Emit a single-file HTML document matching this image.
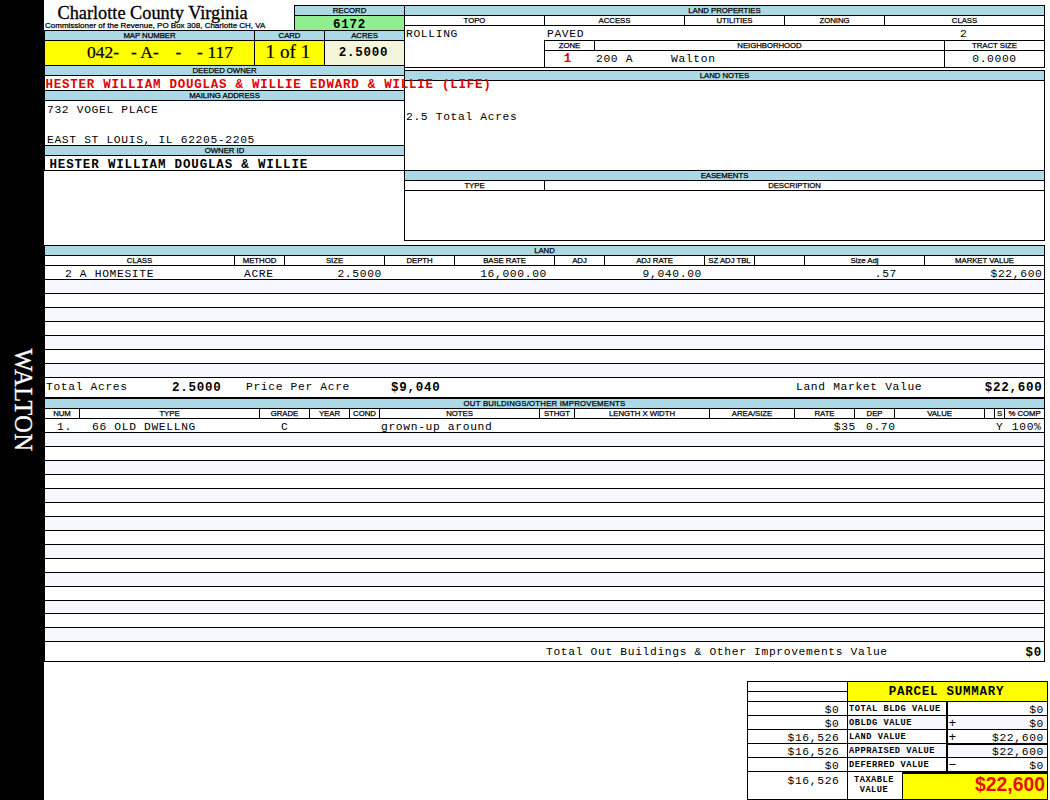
<!DOCTYPE html>
<html><head><meta charset="utf-8"><title>Charlotte County Virginia</title>
<style>
html,body{margin:0;padding:0;background:#fff}
#p{position:relative;width:1050px;height:800px;overflow:hidden;background:#fff}
.r,.l,.t{position:absolute}
.l{background:#000}
.t{white-space:nowrap;color:#000}
.lb{font:7.8px/10px "Liberation Sans",Arial,sans-serif;letter-spacing:-0.05px;-webkit-text-stroke:0.25px #000}
.sub{font:8px/10px "Liberation Sans",Arial,sans-serif;-webkit-text-stroke:0.25px #000}
.title{font:18.3px/19px "Liberation Serif","Times New Roman",serif;-webkit-text-stroke:0.3px #000}
.big{font:17.5px/23px "Liberation Serif","Times New Roman",serif;-webkit-text-stroke:0.2px #000}
.m{font:11.3px/14px "Liberation Mono","Courier New",monospace;letter-spacing:0.65px}
.mb{font:bold 12.5px/14px "Liberation Mono","Courier New",monospace;letter-spacing:0.76px}
.sl{font:bold 8.7px/12px "Liberation Mono","Courier New",monospace;letter-spacing:0.52px}
.red{color:#e00000}
.tot{font:bold 19.4px/25px "Liberation Sans",Arial,sans-serif;color:#e41000}
.walton{left:-36.6px;top:388px;width:120px;text-align:center;letter-spacing:0.5px;color:#fff;-webkit-text-stroke:0.3px #fff;font:24.3px/24px "Liberation Serif","Times New Roman",serif;transform:rotate(90deg);transform-origin:center}
</style></head>
<body><div id="p">
<div class="r" style="left:0px;top:0px;width:44px;height:800px;background:#000"></div>
<div class="t walton">WALTON</div>
<div class="t title" style="left:57.5px;top:3.5px;">Charlotte County Virginia</div>
<div class="t sub" style="left:45px;top:20.5px;">Commissioner of the Revenue, PO Box 308, Charlotte CH, VA</div>
<div class="r" style="left:294px;top:5px;width:111px;height:26px;background:#000"></div>
<div class="r" style="left:295px;top:6px;width:109px;height:9px;background:#add8e6"></div>
<div class="r" style="left:295px;top:16px;width:109px;height:14px;background:#90ee90"></div>
<div class="t lb" style="left:295px;top:6px;width:109px;text-align:center;">RECORD</div>
<div class="t mb" style="left:295px;top:18px;width:109px;text-align:center;">6172</div>
<div class="r" style="left:44px;top:30px;width:361px;height:36px;background:#000"></div>
<div class="r" style="left:45px;top:31px;width:209px;height:9px;background:#add8e6"></div>
<div class="r" style="left:255px;top:31px;width:69px;height:9px;background:#add8e6"></div>
<div class="r" style="left:325px;top:31px;width:79px;height:9px;background:#add8e6"></div>
<div class="r" style="left:45px;top:41px;width:209px;height:24px;background:#ffff00"></div>
<div class="r" style="left:255px;top:41px;width:69px;height:24px;background:#ffff00"></div>
<div class="r" style="left:325px;top:41px;width:79px;height:24px;background:#f5f5dc"></div>
<div class="t lb" style="left:45px;top:31px;width:209px;text-align:center;">MAP NUMBER</div>
<div class="t lb" style="left:255px;top:31px;width:69px;text-align:center;">CARD</div>
<div class="t lb" style="left:325px;top:31px;width:79px;text-align:center;">ACRES</div>
<div class="t big" style="left:87px;top:41px;">042-</div>
<div class="t big" style="left:131px;top:41px;">- A-</div>
<div class="t big" style="left:175.5px;top:41px;">-</div>
<div class="t big" style="left:197px;top:41px;">-</div>
<div class="t big" style="left:207.5px;top:41px;">117</div>
<div class="t big" style="left:265.5px;top:40px;font-size:19.2px;">1 of 1</div>
<div class="t mb" style="left:324px;top:46px;width:79px;text-align:center;">2.5000</div>
<div class="r" style="left:44px;top:65px;width:361px;height:106px;background:#000"></div>
<div class="r" style="left:45px;top:66px;width:359px;height:9px;background:#add8e6"></div>
<div class="t lb" style="left:45px;top:66px;width:359px;text-align:center;">DEEDED OWNER</div>
<div class="r" style="left:45px;top:76px;width:359px;height:14px;background:#fff"></div>
<div class="r" style="left:45px;top:91px;width:359px;height:9px;background:#add8e6"></div>
<div class="t lb" style="left:45px;top:91px;width:359px;text-align:center;">MAILING ADDRESS</div>
<div class="r" style="left:45px;top:101px;width:359px;height:44px;background:#fff"></div>
<div class="r" style="left:45px;top:146px;width:359px;height:9px;background:#add8e6"></div>
<div class="t lb" style="left:45px;top:146px;width:359px;text-align:center;">OWNER ID</div>
<div class="r" style="left:45px;top:156px;width:359px;height:14px;background:#fff"></div>
<div class="t m" style="left:47px;top:103px;">732 VOGEL PLACE</div>
<div class="t m" style="left:47px;top:133px;">EAST ST LOUIS, IL 62205-2205</div>
<div class="t mb" style="left:49.5px;top:158px;letter-spacing:0.84px;">HESTER WILLIAM DOUGLAS &amp; WILLIE</div>
<div class="r" style="left:404px;top:5px;width:641px;height:63px;background:#000"></div>
<div class="r" style="left:405px;top:6px;width:639px;height:9px;background:#add8e6"></div>
<div class="t lb" style="left:405px;top:6px;width:639px;text-align:center;">LAND PROPERTIES</div>
<div class="r" style="left:405px;top:16px;width:139px;height:9px;background:#fff"></div>
<div class="t lb" style="left:405px;top:16px;width:139px;text-align:center;">TOPO</div>
<div class="r" style="left:545px;top:16px;width:139px;height:9px;background:#fff"></div>
<div class="t lb" style="left:545px;top:16px;width:139px;text-align:center;">ACCESS</div>
<div class="r" style="left:685px;top:16px;width:99px;height:9px;background:#fff"></div>
<div class="t lb" style="left:685px;top:16px;width:99px;text-align:center;">UTILITIES</div>
<div class="r" style="left:785px;top:16px;width:99px;height:9px;background:#fff"></div>
<div class="t lb" style="left:785px;top:16px;width:99px;text-align:center;">ZONING</div>
<div class="r" style="left:885px;top:16px;width:159px;height:9px;background:#fff"></div>
<div class="t lb" style="left:885px;top:16px;width:159px;text-align:center;">CLASS</div>
<div class="r" style="left:405px;top:26px;width:639px;height:41px;background:#fff"></div>
<div class="l" style="left:544px;top:40px;width:501px;height:1px"></div>
<div class="l" style="left:544px;top:50px;width:501px;height:1px"></div>
<div class="l" style="left:544px;top:40px;width:1px;height:28px"></div>
<div class="l" style="left:594px;top:40px;width:1px;height:11px"></div>
<div class="l" style="left:944px;top:40px;width:1px;height:28px"></div>
<div class="t lb" style="left:545px;top:41px;width:49px;text-align:center;">ZONE</div>
<div class="t lb" style="left:595px;top:41px;width:349px;text-align:center;">NEIGHBORHOOD</div>
<div class="t lb" style="left:945px;top:41px;width:99px;text-align:center;">TRACT SIZE</div>
<div class="t m" style="left:406px;top:27px;">ROLLING</div>
<div class="t m" style="left:547px;top:27px;">PAVED</div>
<div class="t m" style="left:960px;top:27px;">2</div>
<div class="t mb red" style="left:543.5px;top:52px;width:49px;text-align:center;">1</div>
<div class="t m" style="left:596px;top:52px;">200 A</div>
<div class="t m" style="left:671px;top:52px;">Walton</div>
<div class="t m" style="left:945px;top:52px;width:99px;text-align:center;">0.0000</div>
<div class="r" style="left:404px;top:70px;width:641px;height:102px;background:#000"></div>
<div class="r" style="left:405px;top:71px;width:639px;height:9px;background:#add8e6"></div>
<div class="t lb" style="left:405px;top:71px;width:639px;text-align:center;">LAND NOTES</div>
<div class="r" style="left:405px;top:81px;width:639px;height:89px;background:#fff"></div>
<div class="t m" style="left:406px;top:109.5px;">2.5 Total Acres</div>
<div class="r" style="left:404px;top:171px;width:641px;height:70px;background:#000"></div>
<div class="r" style="left:405px;top:171px;width:639px;height:9px;background:#add8e6"></div>
<div class="t lb" style="left:405px;top:171px;width:639px;text-align:center;">EASEMENTS</div>
<div class="r" style="left:405px;top:181px;width:139px;height:9px;background:#fff"></div>
<div class="r" style="left:545px;top:181px;width:499px;height:9px;background:#fff"></div>
<div class="t lb" style="left:405px;top:181px;width:139px;text-align:center;">TYPE</div>
<div class="t lb" style="left:545px;top:181px;width:499px;text-align:center;">DESCRIPTION</div>
<div class="r" style="left:405px;top:191px;width:639px;height:49px;background:#fff"></div>
<div class="t mb red" style="left:45.5px;top:78px;">HESTER WILLIAM DOUGLAS &amp; WILLIE EDWARD &amp; WILLIE (LIFE)</div>
<div class="r" style="left:44px;top:245px;width:1001px;height:153px;background:#000"></div>
<div class="r" style="left:45px;top:246px;width:999px;height:9px;background:#add8e6"></div>
<div class="t lb" style="left:45px;top:246px;width:999px;text-align:center;">LAND</div>
<div class="r" style="left:45px;top:256px;width:999px;height:9px;background:#fff"></div>
<div class="t lb" style="left:45px;top:256px;width:189px;text-align:center;">CLASS</div>
<div class="t lb" style="left:235px;top:256px;width:49px;text-align:center;">METHOD</div>
<div class="t lb" style="left:285px;top:256px;width:99px;text-align:center;">SIZE</div>
<div class="t lb" style="left:385px;top:256px;width:69px;text-align:center;">DEPTH</div>
<div class="t lb" style="left:455px;top:256px;width:99px;text-align:center;">BASE RATE</div>
<div class="t lb" style="left:555px;top:256px;width:49px;text-align:center;">ADJ</div>
<div class="t lb" style="left:605px;top:256px;width:99px;text-align:center;">ADJ RATE</div>
<div class="t lb" style="left:705px;top:256px;width:49px;text-align:center;">SZ ADJ TBL</div>
<div class="t lb" style="left:805px;top:256px;width:119px;text-align:center;">Size Adj</div>
<div class="t lb" style="left:925px;top:256px;width:119px;text-align:center;">MARKET VALUE</div>
<div class="l" style="left:234px;top:256px;width:1px;height:9px"></div>
<div class="l" style="left:284px;top:256px;width:1px;height:9px"></div>
<div class="l" style="left:384px;top:256px;width:1px;height:9px"></div>
<div class="l" style="left:454px;top:256px;width:1px;height:9px"></div>
<div class="l" style="left:554px;top:256px;width:1px;height:9px"></div>
<div class="l" style="left:604px;top:256px;width:1px;height:9px"></div>
<div class="l" style="left:704px;top:256px;width:1px;height:9px"></div>
<div class="l" style="left:754px;top:256px;width:1px;height:9px"></div>
<div class="l" style="left:804px;top:256px;width:1px;height:9px"></div>
<div class="l" style="left:924px;top:256px;width:1px;height:9px"></div>
<div class="r" style="left:45px;top:266px;width:999px;height:13px;background:#fff"></div>
<div class="r" style="left:45px;top:280px;width:999px;height:13px;background:#f7f7ff"></div>
<div class="r" style="left:45px;top:294px;width:999px;height:13px;background:#fff"></div>
<div class="r" style="left:45px;top:308px;width:999px;height:13px;background:#f7f7ff"></div>
<div class="r" style="left:45px;top:322px;width:999px;height:13px;background:#fff"></div>
<div class="r" style="left:45px;top:336px;width:999px;height:13px;background:#f7f7ff"></div>
<div class="r" style="left:45px;top:350px;width:999px;height:13px;background:#fff"></div>
<div class="r" style="left:45px;top:364px;width:999px;height:13px;background:#f7f7ff"></div>
<div class="r" style="left:45px;top:378px;width:999px;height:19px;background:#fff"></div>
<div class="t m" style="left:65px;top:267px;">2 A HOMESITE</div>
<div class="t m" style="left:244px;top:267px;">ACRE</div>
<div class="t m" style="left:287px;top:267px;width:95px;text-align:right;">2.5000</div>
<div class="t m" style="left:455px;top:267px;width:92px;text-align:right;">16,000.00</div>
<div class="t m" style="left:605px;top:267px;width:97px;text-align:right;">9,040.00</div>
<div class="t m" style="left:805px;top:267px;width:92px;text-align:right;">.57</div>
<div class="t m" style="left:925px;top:267px;width:117.5px;text-align:right;">$22,600</div>
<div class="t m" style="left:46px;top:379.7px;">Total Acres</div>
<div class="t mb" style="left:172px;top:380.5px;">2.5000</div>
<div class="t m" style="left:246px;top:379.7px;">Price Per Acre</div>
<div class="t mb" style="left:391px;top:380.5px;">$9,040</div>
<div class="t m" style="left:796px;top:379.7px;">Land Market Value</div>
<div class="t mb" style="left:925px;top:380.5px;width:117.5px;text-align:right;">$22,600</div>
<div class="r" style="left:44px;top:398px;width:1001px;height:264px;background:#000"></div>
<div class="r" style="left:45px;top:399px;width:999px;height:9px;background:#add8e6"></div>
<div class="t lb" style="left:45px;top:399px;width:999px;text-align:center;letter-spacing:0.2px;">OUT BUILDINGS/OTHER IMPROVEMENTS</div>
<div class="r" style="left:45px;top:409px;width:999px;height:9px;background:#fff"></div>
<div class="t lb" style="left:45px;top:409px;width:34px;text-align:center;">NUM</div>
<div class="t lb" style="left:80px;top:409px;width:179px;text-align:center;">TYPE</div>
<div class="t lb" style="left:260px;top:409px;width:49px;text-align:center;">GRADE</div>
<div class="t lb" style="left:310px;top:409px;width:39px;text-align:center;">YEAR</div>
<div class="t lb" style="left:350px;top:409px;width:29px;text-align:center;">COND</div>
<div class="t lb" style="left:380px;top:409px;width:159px;text-align:center;">NOTES</div>
<div class="t lb" style="left:540px;top:409px;width:34px;text-align:center;">STHGT</div>
<div class="t lb" style="left:575px;top:409px;width:134px;text-align:center;">LENGTH X WIDTH</div>
<div class="t lb" style="left:710px;top:409px;width:84px;text-align:center;">AREA/SIZE</div>
<div class="t lb" style="left:795px;top:409px;width:59px;text-align:center;">RATE</div>
<div class="t lb" style="left:855px;top:409px;width:39px;text-align:center;">DEP</div>
<div class="t lb" style="left:895px;top:409px;width:89px;text-align:center;">VALUE</div>
<div class="t lb" style="left:995px;top:409px;width:9px;text-align:center;">S</div>
<div class="t lb" style="left:1005px;top:409px;width:39px;text-align:center;">% COMP</div>
<div class="l" style="left:79px;top:409px;width:1px;height:9px"></div>
<div class="l" style="left:259px;top:409px;width:1px;height:9px"></div>
<div class="l" style="left:309px;top:409px;width:1px;height:9px"></div>
<div class="l" style="left:349px;top:409px;width:1px;height:9px"></div>
<div class="l" style="left:379px;top:409px;width:1px;height:9px"></div>
<div class="l" style="left:539px;top:409px;width:1px;height:9px"></div>
<div class="l" style="left:574px;top:409px;width:1px;height:9px"></div>
<div class="l" style="left:709px;top:409px;width:1px;height:9px"></div>
<div class="l" style="left:794px;top:409px;width:1px;height:9px"></div>
<div class="l" style="left:854px;top:409px;width:1px;height:9px"></div>
<div class="l" style="left:894px;top:409px;width:1px;height:9px"></div>
<div class="l" style="left:984px;top:409px;width:1px;height:9px"></div>
<div class="l" style="left:994px;top:409px;width:1px;height:9px"></div>
<div class="l" style="left:1004px;top:409px;width:1px;height:9px"></div>
<div class="r" style="left:45px;top:419px;width:999px;height:13px;background:#fff"></div>
<div class="r" style="left:45px;top:433px;width:999px;height:13px;background:#f7f7ff"></div>
<div class="r" style="left:45px;top:447px;width:999px;height:13px;background:#fff"></div>
<div class="r" style="left:45px;top:461px;width:999px;height:13px;background:#f7f7ff"></div>
<div class="r" style="left:45px;top:475px;width:999px;height:13px;background:#fff"></div>
<div class="r" style="left:45px;top:489px;width:999px;height:13px;background:#f7f7ff"></div>
<div class="r" style="left:45px;top:503px;width:999px;height:13px;background:#fff"></div>
<div class="r" style="left:45px;top:517px;width:999px;height:13px;background:#f7f7ff"></div>
<div class="r" style="left:45px;top:531px;width:999px;height:13px;background:#fff"></div>
<div class="r" style="left:45px;top:545px;width:999px;height:13px;background:#f7f7ff"></div>
<div class="r" style="left:45px;top:559px;width:999px;height:13px;background:#fff"></div>
<div class="r" style="left:45px;top:573px;width:999px;height:13px;background:#f7f7ff"></div>
<div class="r" style="left:45px;top:587px;width:999px;height:13px;background:#fff"></div>
<div class="r" style="left:45px;top:601px;width:999px;height:12px;background:#f7f7ff"></div>
<div class="r" style="left:45px;top:614px;width:999px;height:13px;background:#fff"></div>
<div class="r" style="left:45px;top:628px;width:999px;height:13px;background:#f7f7ff"></div>
<div class="r" style="left:45px;top:642px;width:999px;height:19px;background:#fff"></div>
<div class="t m" style="left:57px;top:420px;">1.</div>
<div class="t m" style="left:92px;top:420px;">66 OLD DWELLNG</div>
<div class="t m" style="left:281px;top:420px;">C</div>
<div class="t m" style="left:381px;top:420px;">grown-up around</div>
<div class="t m" style="left:794px;top:420px;width:62px;text-align:right;">$35</div>
<div class="t m" style="left:866px;top:420px;">0.70</div>
<div class="t m" style="left:996px;top:420px;">Y</div>
<div class="t m" style="left:1003px;top:420px;width:38.5px;text-align:right;">100%</div>
<div class="t m" style="left:546px;top:645px;">Total Out Buildings &amp; Other Improvements Value</div>
<div class="t mb" style="left:925px;top:645.5px;width:117px;text-align:right;">$0</div>
<div class="r" style="left:747px;top:681px;width:301px;height:119px;background:#000"></div>
<div class="r" style="left:748px;top:682px;width:99px;height:9px;background:#fff"></div>
<div class="r" style="left:748px;top:692px;width:99px;height:9px;background:#fff"></div>
<div class="r" style="left:848px;top:682px;width:199px;height:19px;background:#ffff00"></div>
<div class="t mb" style="left:848px;top:685px;width:197px;text-align:center;">PARCEL SUMMARY</div>
<div class="r" style="left:748px;top:702px;width:99px;height:13px;background:#fff"></div>
<div class="r" style="left:848px;top:702px;width:98px;height:13px;background:#fff"></div>
<div class="r" style="left:948px;top:702px;width:99px;height:13px;background:#fff"></div>
<div class="t m" style="left:748px;top:702.5px;width:91.5px;text-align:right;">$0</div>
<div class="t sl" style="left:849px;top:703px;">TOTAL BLDG VALUE</div>
<div class="t m" style="left:948px;top:702.5px;width:96px;text-align:right;">$0</div>
<div class="r" style="left:748px;top:716px;width:99px;height:13px;background:#fff"></div>
<div class="r" style="left:848px;top:716px;width:98px;height:13px;background:#f7f7ff"></div>
<div class="r" style="left:948px;top:716px;width:99px;height:13px;background:#f7f7ff"></div>
<div class="t m" style="left:748px;top:716.5px;width:91.5px;text-align:right;">$0</div>
<div class="t sl" style="left:849px;top:717px;">OBLDG VALUE</div>
<div class="t m" style="left:948px;top:716.5px;width:96px;text-align:right;">$0</div>
<div class="t m" style="left:948.6px;top:716.8px;font-size:13px;">+</div>
<div class="r" style="left:748px;top:730px;width:99px;height:13px;background:#fff"></div>
<div class="r" style="left:848px;top:730px;width:98px;height:13px;background:#fff"></div>
<div class="r" style="left:948px;top:730px;width:99px;height:13px;background:#fff"></div>
<div class="t m" style="left:748px;top:730.5px;width:91.5px;text-align:right;">$16,526</div>
<div class="t sl" style="left:849px;top:731px;">LAND VALUE</div>
<div class="t m" style="left:948px;top:730.5px;width:96px;text-align:right;">$22,600</div>
<div class="t m" style="left:948.6px;top:730.8px;font-size:13px;">+</div>
<div class="r" style="left:748px;top:744px;width:99px;height:13px;background:#fff"></div>
<div class="r" style="left:848px;top:744px;width:98px;height:13px;background:#f7f7ff"></div>
<div class="r" style="left:948px;top:744px;width:99px;height:13px;background:#f7f7ff"></div>
<div class="t m" style="left:748px;top:744.5px;width:91.5px;text-align:right;">$16,526</div>
<div class="t sl" style="left:849px;top:745px;">APPRAISED VALUE</div>
<div class="t m" style="left:948px;top:744.5px;width:96px;text-align:right;">$22,600</div>
<div class="r" style="left:748px;top:758px;width:99px;height:13px;background:#fff"></div>
<div class="r" style="left:848px;top:758px;width:98px;height:13px;background:#fff"></div>
<div class="r" style="left:948px;top:758px;width:99px;height:13px;background:#fff"></div>
<div class="t m" style="left:748px;top:758.5px;width:91.5px;text-align:right;">$0</div>
<div class="t sl" style="left:849px;top:759px;">DEFERRED VALUE</div>
<div class="t m" style="left:948px;top:758.5px;width:96px;text-align:right;">$0</div>
<div class="t m" style="left:948.6px;top:758.8px;font-size:13px;">−</div>
<div class="r" style="left:748px;top:772px;width:99px;height:27px;background:#fff"></div>
<div class="r" style="left:848px;top:772px;width:54px;height:27px;background:#fff"></div>
<div class="r" style="left:903px;top:774px;width:144px;height:25px;background:#ffff00"></div>
<div class="t m" style="left:748px;top:773.5px;width:91.5px;text-align:right;">$16,526</div>
<div class="t sl" style="left:848px;top:774px;width:52px;text-align:center;">TAXABLE</div>
<div class="t sl" style="left:848px;top:784px;width:52px;text-align:center;">VALUE</div>
<div class="t tot" style="left:903px;top:772px;width:142px;text-align:right;">$22,600</div>
<div class="l" style="left:948px;top:744px;width:100px;height:1px"></div>
</div></body></html>
